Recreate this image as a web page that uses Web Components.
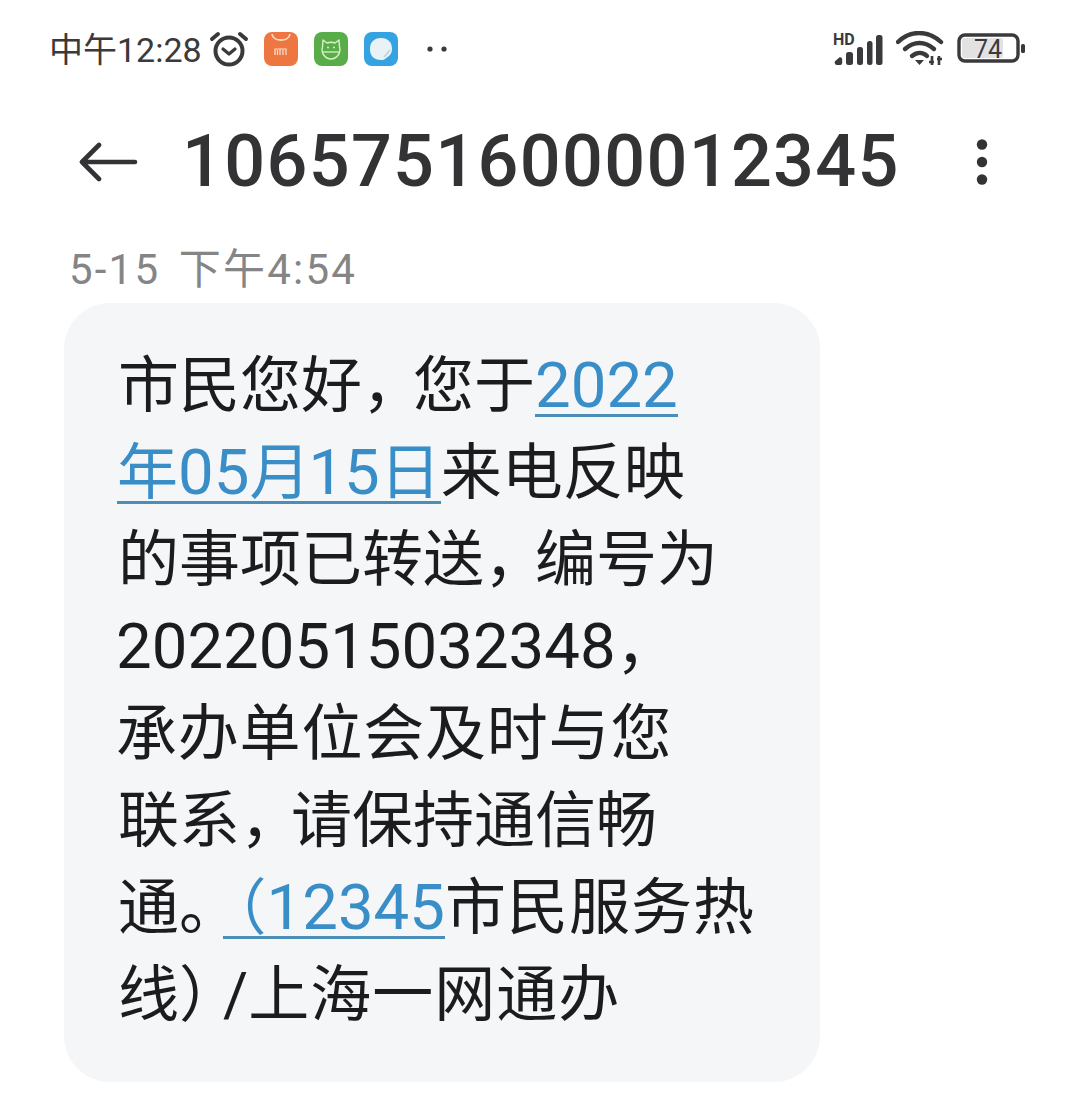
<!DOCTYPE html>
<html lang="zh">
<head>
<meta charset="utf-8">
<title>短信</title>
<style>
  html, body { margin: 0; background: #fff; }
  body { width: 1080px; height: 1101px; overflow: hidden; font-family: Roboto, "Noto Sans CJK SC", sans-serif; }
</style>
</head>
<body>
<sms-screen>
  <status-bar time="中午12:28"></status-bar>
  <title-bar number="10657516000012345"></title-bar>
  <sms-time>5-15 下午4:54</sms-time>
  <sms-bubble>
    <sms-line>市民您好<sms-gap cut="10">，</sms-gap>您于<sms-link><sms-num>2022</sms-num></sms-link></sms-line>
    <sms-line shift="-1"><sms-link>年<sms-num>05</sms-num><sms-gap cut="2">月</sms-gap><sms-num>15</sms-num>日</sms-link>来电反映</sms-line>
    <sms-line>的事项已转送<sms-gap cut="10">，</sms-gap>编号为</sms-line>
    <sms-line shift="-2"><sms-num>20220515032348</sms-num>，</sms-line>
    <sms-line shift="-2" track="0.8">承办单位会及时与您</sms-line>
    <sms-line>联系<sms-gap cut="10">，</sms-gap>请保持通信畅</sms-line>
    <sms-line>通<sms-gap cut="17">。</sms-gap><sms-link lead="13"><sms-gap cut="0">（</sms-gap><sms-num>12345</sms-num></sms-link><sms-gap cut="-1">市民服务热</sms-gap></sms-line>
    <sms-line>线<sms-gap cut="17">）</sms-gap>/<sms-gap cut="-1">上海一网通办</sms-gap></sms-line>
  </sms-bubble>
</sms-screen>

<script>
class SmsScreen extends HTMLElement {
    constructor() {
        super();
        this.attachShadow({ mode: "open" });
        this.shadowRoot.innerHTML = `
        <style>
            :host { display: flex; flex-direction: column; width: 1080px; height: 1101px; }
        </style>
        <slot></slot>
        `;
    }
}
customElements.define("sms-screen", SmsScreen);

class StatusBar extends HTMLElement {
    constructor() {
        super();
        this.attachShadow({ mode: "open" });
        const time = this.getAttribute("time") || "";
        this.shadowRoot.innerHTML = `
        <style>
            :host { display: flex; align-items: center; height: 98px; padding: 0 55px 0 49px; box-sizing: border-box; color: #3a3a3c; }
            .time { font: 400 34px/1 Roboto, "Noto Sans CJK SC", sans-serif; margin: 2px 7px 0 0; white-space: nowrap; }
            .left { display: flex; align-items: center; }
            .right { display: flex; align-items: center; margin-left: auto; }
            svg { display: block; }
        </style>
        <div class="left">
            <span class="time">${time}</span>
            <svg width="40" height="38" viewBox="0 0 40 38" fill="none" stroke="#3a3a3c" stroke-linecap="round">
                <circle cx="20" cy="21" r="13.5" stroke-width="4"/>
                <path d="M14 19l6 5 6-5" stroke-width="3.2" stroke-linejoin="round"/>
                <path d="M3 9l6-5M37 9l-6-5" stroke-width="4"/>
            </svg>
            <svg style="margin-left:14px" width="36" height="36" viewBox="0 0 36 36">
                <rect x="1" y="1" width="34" height="34" rx="8" fill="#ee7640"/>
                <path d="M9 3c1 8 17 8 18 0" fill="none" stroke="#fbd9c4" stroke-width="1.8"/>
                <path d="M12 24v-6h5v6M17 18h6v6M14.500 19v5M20 19v5" fill="none" stroke="#fbe3d6" stroke-width="1.200"/>
            </svg>
            <svg style="margin-left:14px" width="36" height="36" viewBox="0 0 36 36">
                <rect x="1" y="1" width="34" height="34" rx="8" fill="#58ad48"/>
                <path d="M10 9l4 3c2.500-1 5.500-1 8 0l4-3 .5 7c2 6-3 12-8.500 12S7.500 22 9.500 16z" fill="none" stroke="#d9f0c9" stroke-width="1.400" stroke-linejoin="round"/>
                <path d="M9 21h18" stroke="#d9f0c9" stroke-width="1.300"/>
                <circle cx="15" cy="16.500" r="1" fill="#d9f0c9"/><circle cx="21" cy="16.500" r="1" fill="#d9f0c9"/>
            </svg>
            <svg style="margin-left:14px" width="36" height="36" viewBox="0 0 36 36">
                <rect x="1" y="1" width="34" height="34" rx="8" fill="#35a3e2"/>
                <path d="M18 7c7 0 11 4 11 11 0 3-1 5-3 7l-4 3c-1 1-3 1-4 1-7 0-11-4-11-11S11 7 18 7z" fill="#e9f2f4"/>
                <path d="M21 26l6-7" stroke="#b9d4de" stroke-width="1.6"/>
            </svg>
            <svg style="margin-left:27px" width="24" height="8" viewBox="0 0 24 8" fill="#3a3a3c">
                <circle cx="4" cy="4" r="2.6"/><circle cx="18" cy="4" r="2.6"/>
            </svg>
        </div>
        <div class="right">
            <svg width="52" height="38" viewBox="0 0 52 38" fill="#3a3a3c">
                <text x="1" y="15" font-family="Roboto, sans-serif" font-size="16" font-weight="700">HD</text>
                <path d="M5 35a2.500 2.500 0 0 1-.8-4.800l3-2.600a2 2 0 0 1 3 1.600V33a2 2 0 0 1-2 2z"/>
                <rect x="14" y="22" width="7" height="13" rx="2.500"/>
                <rect x="25" y="17" width="6" height="18" rx="2.500"/>
                <rect x="35" y="11" width="5.500" height="24" rx="2.500"/>
                <rect x="44" y="5" width="6.500" height="30" rx="2.500"/>
            </svg>
            <svg style="margin-left:12px" width="48" height="36" viewBox="0 0 48 36" fill="none" stroke="#3a3a3c" stroke-width="4.400" stroke-linecap="round">
                <path d="M2 11C14-1 32-1 45 11"/>
                <path d="M9 18c9-8 20-8 29 0"/>
                <path d="M16 25c5-4 11-4 15 0"/>
                <path d="M19 29l4.500 5 4.500-5z" fill="#3a3a3c" stroke="none"/>
                <path d="M36 25v9M33 31h5M43 34v-9M41 28h5" stroke-width="2.600" stroke-linecap="butt"/>
            </svg>
            <svg style="margin-left:13px" width="68" height="32" viewBox="0 0 68 32">
                <rect x="2" y="2" width="59" height="26" rx="6" fill="#fff" stroke="#3a3a3c" stroke-width="3.400"/>
                <rect x="5" y="5" width="41" height="20" rx="2" fill="#e2e2e2"/>
                <rect x="64" y="11" width="4" height="9" rx="1.600" fill="#3a3a3c"/>
                <text x="31" y="25" text-anchor="middle" font-family="Roboto, sans-serif" font-size="25" fill="#3a3a3c">74</text>
            </svg>
        </div>
        `;
    }
}
customElements.define("status-bar", StatusBar);

class TitleBar extends HTMLElement {
    constructor() {
        super();
        this.attachShadow({ mode: "open" });
        const number = this.getAttribute("number") || "";
        this.shadowRoot.innerHTML = `
        <style>
            :host { display: flex; align-items: center; height: 128px; padding: 0 92px 0 79px; box-sizing: border-box; color: #333335; }
            .back { margin-right: 43px; display: block; }
            .num { font: 500 72px/1 Roboto, sans-serif; letter-spacing: 1.300px; white-space: nowrap; }
            .more { margin-left: auto; display: block; }
        </style>
        <svg class="back" width="60" height="40" viewBox="0 0 60 40" fill="none" stroke="#333335" stroke-width="4.600" stroke-linecap="round" stroke-linejoin="round">
            <path d="M20 3L3 20l17 17M3 20h53"/>
        </svg>
        <span class="num">${number}</span>
        <svg class="more" width="12" height="46" viewBox="0 0 12 46" fill="#333335">
            <circle cx="6" cy="5.500" r="5.200"/><circle cx="6" cy="23" r="5.200"/><circle cx="6" cy="40.500" r="5.200"/>
        </svg>
        `;
    }
}
customElements.define("title-bar", TitleBar);

class SmsTime extends HTMLElement {
    constructor() {
        super();
        this.attachShadow({ mode: "open" });
        this.shadowRoot.innerHTML = `
        <style>
            :host { display: block; margin: 12px 0 0 69px; height: 65px; color: #858585; letter-spacing: 2.200px; word-spacing: 6px; font: 400 42px/64px Roboto, "Noto Sans CJK SC", sans-serif; }
        </style>
        <slot></slot>
        `;
    }
}
customElements.define("sms-time", SmsTime);

class SmsBubble extends HTMLElement {
    constructor() {
        super();
        this.attachShadow({ mode: "open" });
        this.shadowRoot.innerHTML = `
        <style>
            :host { display: block; box-sizing: border-box; width: 756px; height: 779px; margin-left: 64px; padding: 40px 0 0 54px; background: #f5f6f8; border-radius: 46px; color: #1c1c1e; font: 400 61px/87px Roboto, "Noto Sans CJK SC", sans-serif; }
        </style>
        <slot></slot>
        `;
    }
}
customElements.define("sms-bubble", SmsBubble);

class SmsLine extends HTMLElement {
    constructor() {
        super();
        this.attachShadow({ mode: "open" });
        const shift = this.getAttribute("shift") || 0;
        const track = this.getAttribute("track") || 0;
        this.shadowRoot.innerHTML = `<style>:host { display: block; white-space: nowrap; margin-left: ${shift}px; letter-spacing: ${track}px; }</style><slot></slot>`;
    }
}
customElements.define("sms-line", SmsLine);

// inline hosts: no whitespace around the slot or it renders as a space
// digits in the shot are a bit bigger than the hanzi around them
class SmsNum extends HTMLElement {
    constructor() {
        super();
        this.attachShadow({ mode: "open" });
        this.shadowRoot.innerHTML = `<style>:host { display: inline; font-size: 63.5px; line-height: 1; }</style><slot></slot>`;
    }
}
customElements.define("sms-num", SmsNum);

class SmsGap extends HTMLElement {
    constructor() {
        super();
        this.attachShadow({ mode: "open" });
        const cut = Number(this.getAttribute("cut")) || 0;
        this.shadowRoot.innerHTML = `<style>:host { display: inline; letter-spacing: ${-cut}px; }</style><slot></slot>`;
    }
}
customElements.define("sms-gap", SmsGap);

class SmsLink extends HTMLElement {
    constructor() {
        super();
        this.attachShadow({ mode: "open" });
        const lead = this.getAttribute("lead") || 0;
        this.shadowRoot.innerHTML = `<style>:host {
                display: inline;
                color: #3a8ec8;
                padding-left: ${lead}px;
                background: linear-gradient(#4b8fb8, #4b8fb8) no-repeat 0 calc(100% - 5.500px) / 100% 3px;
            }</style><slot></slot>`;
    }
}
customElements.define("sms-link", SmsLink);
</script>
</body>
</html>
